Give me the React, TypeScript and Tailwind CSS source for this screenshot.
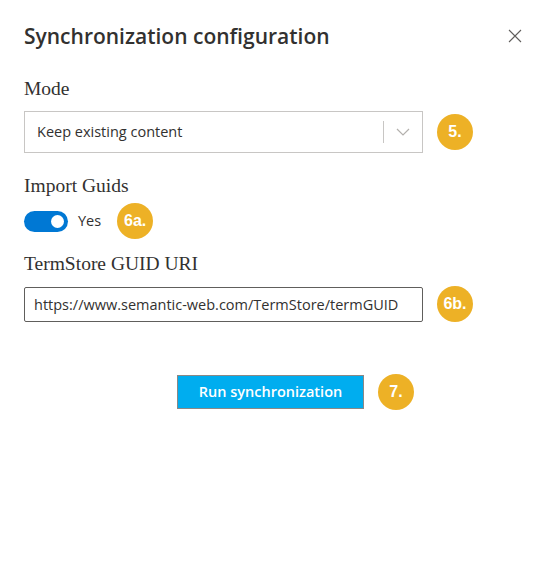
import React, { useState } from "react";

const Badge = ({ label }: { label: string }) => (
  <span className="flex h-9 w-9 shrink-0 items-center justify-center rounded-full bg-[#edb126] font-['Liberation_Sans',Arial,sans-serif] text-[16px] font-bold text-white">
    {label}
  </span>
);

const App = () => {
  const [importGuids, setImportGuids] = useState(true);

  return (
    <div className="h-[567px] w-[533px] bg-white font-['Open_Sans',sans-serif] text-[#323130]">
      <div className="flex items-center justify-between pl-6 pr-[6px] pt-[22px]">
        <h1 className="text-[21px] font-semibold leading-7">Synchronization configuration</h1>
        <button type="button" className="flex h-6 w-6 items-center justify-center text-[#605e5c]">
          <svg width="14" height="14" viewBox="0 0 14 14" fill="none" stroke="currentColor" strokeWidth="1.1">
            <path d="M1 1L13 13M13 1L1 13" />
          </svg>
        </button>
      </div>

      <div className="px-6 pt-[27px]">
        {/* Mode */}
        <label className="block font-['Liberation_Serif',serif] text-[19.5px] leading-6">Mode</label>
        <div className="mt-[10px] flex items-center gap-[14px]">
          <div className="flex h-[42px] w-[399px] items-center border border-[#c8c6c4] bg-white">
            <span className="flex-1 pl-3 text-[14.5px]">Keep existing content</span>
            <span className="h-[22px] w-px bg-[#c8c6c4]" />
            <span className="flex w-[38px] items-center justify-center text-[#b3b0ad]">
              <svg width="14" height="8" viewBox="0 0 14 8" fill="none" stroke="currentColor" strokeWidth="1.2">
                <path d="M1 1L7 7L13 1" />
              </svg>
            </span>
          </div>
          <Badge label="5." />
        </div>

        {/* Import Guids */}
        <label className="mt-[21px] block font-['Liberation_Serif',serif] text-[19.5px] leading-6">Import Guids</label>
        <div className="mt-[5px] flex items-center">
          <button
            type="button"
            onClick={() => setImportGuids(!importGuids)}
            className={`flex h-[21px] w-[44px] items-center rounded-full px-[4px] ${importGuids ? "justify-end bg-[#0078d4]" : "justify-start border border-[#605e5c] bg-white"}`}
          >
            <span className={`h-[13px] w-[13px] rounded-full ${importGuids ? "bg-white" : "bg-[#605e5c]"}`} />
          </button>
          <span className="ml-[10px] text-[14.5px]">{importGuids ? "Yes" : "No"}</span>
          <span className="ml-[16px]">
            <Badge label="6a." />
          </span>
        </div>

        {/* TermStore GUID URI */}
        <label className="mt-[13px] block font-['Liberation_Serif',serif] text-[19.5px] leading-6">TermStore GUID URI</label>
        <div className="mt-[10px] flex items-center gap-[14px]">
          <input
            type="text"
            defaultValue="https://www.semantic-web.com/TermStore/termGUID"
            className="h-[35px] w-[399px] rounded-[2px] border border-[#605e5c] px-[9px] text-[14.5px] text-[#323130] outline-none"
          />
          <Badge label="6b." />
        </div>

        {/* Run */}
        <div className="mt-[52px] flex items-center gap-[14px] pl-[153px]">
          <button
            type="button"
            className="h-[34px] w-[187px] border border-[#8a8886] bg-[#00adef] text-[14.5px] font-semibold text-white"
          >
            Run synchronization
          </button>
          <Badge label="7." />
        </div>
      </div>
    </div>
  );
};

export default App;
